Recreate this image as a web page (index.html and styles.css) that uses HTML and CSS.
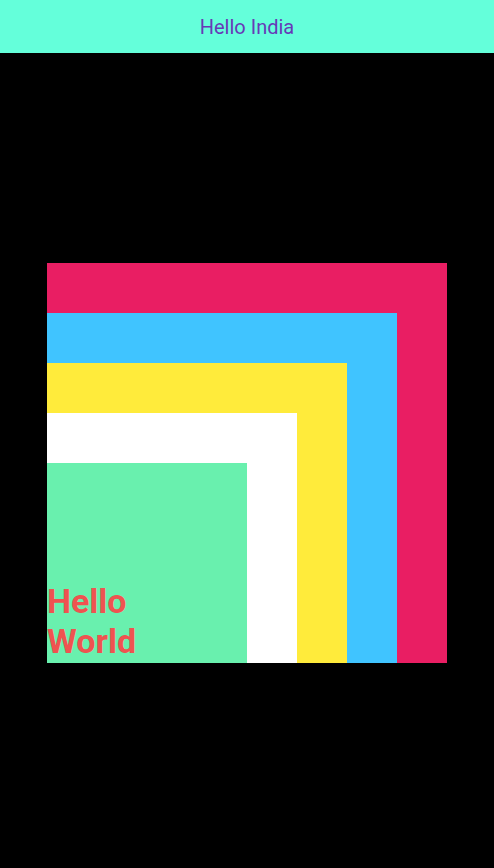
FILE: index.html
```html
<!DOCTYPE html>
<html>
<head>
<meta charset="utf-8">
<link rel="stylesheet" href="styles.css">
</head>
<body>
<header class="bar">Hello India</header>
<main class="stage">
  <div class="box red">
    <div class="box blue">
      <div class="box yellow">
        <div class="box white">
          <div class="box green">
            <div class="label">Hello<br>World</div>
          </div>
        </div>
      </div>
    </div>
  </div>
</main>
</body>
</html>
```
FILE: styles.css
```css
html, body { margin: 0; padding: 0; }
body { background: #000; font-family: Roboto, "Noto Sans", sans-serif; width: 494px; height: 868px; overflow: hidden; }
.bar { height: 53px; background: #64FFDA; color: #673AB7; font-size: 20px; display: flex; align-items: center; justify-content: center; }
.stage { display: flex; justify-content: center; padding-top: 210px; }
.box { display: flex; align-items: flex-end; justify-content: flex-start; }
.red { width: 400px; height: 400px; background: #E91E63; }
.blue { width: 350px; height: 350px; background: #40C4FF; }
.yellow { width: 300px; height: 300px; background: #FFEB3B; }
.white { width: 250px; height: 250px; background: #FFFFFF; }
.green { width: 200px; height: 200px; background: #69F0AE; }
.label { color: #EF5350; font-size: 34px; font-weight: 700; line-height: 40px; padding-bottom: 2px; }
```
